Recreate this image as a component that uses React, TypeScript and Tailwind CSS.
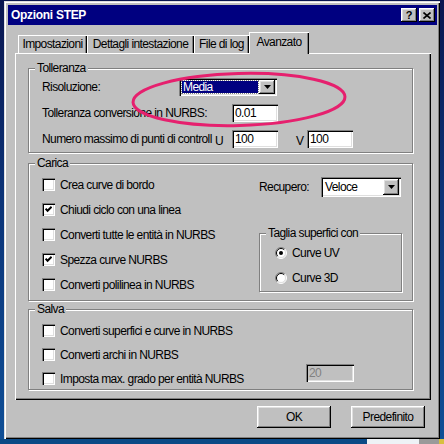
import type { ReactNode } from "react";

const raised =
  "shadow-[inset_-1px_-1px_#000000,inset_1px_1px_#ffffff,inset_-2px_-2px_#808080,inset_2px_2px_#dfdfdf]";
const sunken =
  "shadow-[inset_1px_1px_#808080,inset_2px_2px_#000000,inset_-1px_-1px_#ffffff,inset_-2px_-2px_#dfdfdf]";

function CheckBox({ checked = false }: { checked?: boolean }) {
  return (
    <span className={`flex h-[13px] w-[13px] shrink-0 items-center justify-center bg-white ${sunken}`}>
      {checked && (
        <svg width="7" height="7" viewBox="0 0 7 7">
          <path d="M0.6 2.6 L2.6 4.8 L6.6 0.8" stroke="#000" strokeWidth="2" fill="none" />
        </svg>
      )}
    </span>
  );
}

function Radio({ on = false }: { on?: boolean }) {
  return (
    <svg width="12" height="12" viewBox="0 0 12 12" className="shrink-0">
      <circle cx="6" cy="6" r="5" fill="#fff" />
      <path d="M2.1 9.9 A5.5 5.5 0 0 1 9.9 2.1" stroke="#808080" fill="none" />
      <path d="M2.8 9.2 A4.5 4.5 0 0 1 9.2 2.8" stroke="#000" fill="none" />
      <path d="M9.9 2.1 A5.5 5.5 0 0 1 2.1 9.9" stroke="#fff" fill="none" />
      <path d="M9.2 2.8 A4.5 4.5 0 0 1 2.8 9.2" stroke="#dfdfdf" fill="none" />
      {on && <circle cx="6" cy="6" r="2" fill="#000" />}
    </svg>
  );
}

function Arrow() {
  return (
    <span className={`flex w-[16px] shrink-0 items-center justify-center bg-[#c0c0c0] ${raised}`}>
      <svg width="7" height="4" viewBox="0 0 7 4">
        <path d="M0 0 H7 L3.5 4 Z" fill="#000" />
      </svg>
    </span>
  );
}

function Combo({ value, className, highlight = false }: { value: string; className: string; highlight?: boolean }) {
  return (
    <div className={`flex shrink-0 bg-white p-[2px] ${sunken} ${className}`}>
      {highlight ? (
        <span className="m-[1px] flex flex-1 items-center bg-[#000080] pl-[1px] text-white outline outline-1 outline-dotted outline-[#808080]">
          {value}
        </span>
      ) : (
        <span className="flex flex-1 items-center pl-[2px]">{value}</span>
      )}
      <Arrow />
    </div>
  );
}

function Edit({ value, className, disabled = false }: { value: string; className: string; disabled?: boolean }) {
  return (
    <div
      className={`flex shrink-0 items-center px-[3px] ${sunken} ${
        disabled ? "bg-[#c0c0c0] text-[#808080]" : "bg-white"
      } ${className}`}
    >
      {value}
    </div>
  );
}

function Group({ label, className, children }: { label: string; className: string; children: ReactNode }) {
  return (
    <div className={`relative shrink-0 border border-[#808080] shadow-[inset_1px_1px_#ffffff,1px_1px_#ffffff] ${className}`}>
      <span className="absolute left-[6px] top-[-8px] bg-[#c0c0c0] px-[2px] leading-[14px]">{label}</span>
      {children}
    </div>
  );
}

function CheckRow({ label, checked = false }: { label: string; checked?: boolean }) {
  return (
    <div className="flex h-[13px] items-center gap-[5px] whitespace-nowrap">
      <CheckBox checked={checked} />
      <span>{label}</span>
    </div>
  );
}

function Tab({ label, className, active = false }: { label: string; className: string; active?: boolean }) {
  return (
    <div
      className={`flex shrink-0 items-center justify-center bg-[#c0c0c0] ${
        active
          ? "relative z-10 -mb-[1px] h-[22px] pb-[2px] shadow-[inset_1px_1px_#ffffff,inset_-1px_0_#000000,inset_-2px_0_#808080]"
          : "h-[18px] shadow-[inset_1px_1px_#ffffff,inset_-1px_0_#000000,inset_-2px_0_#808080]"
      } ${className}`}
    >
      {label}
    </div>
  );
}

function Button({ label }: { label: string }) {
  return (
    <div className={`flex h-[22px] w-[74px] items-center justify-center bg-[#c0c0c0] ${raised}`}>{label}</div>
  );
}

export default function App() {
  return (
    <div className="relative h-[444px] w-[444px] overflow-hidden bg-[linear-gradient(180deg,#0a1650_0%,#0c3478_45%,#0f4f96_100%)] pl-[4px] pt-[1px] font-['Liberation_Sans',Arial,sans-serif] text-[12px] tracking-[-0.6px] text-black">
      <div className="flex h-[438px] w-[436px] flex-col bg-[#c0c0c0] pl-[4px] pr-[3px] pt-[4px] shadow-[inset_1px_1px_#dfdfdf,inset_2px_2px_#ffffff,inset_-1px_-1px_#000000,inset_-2px_-2px_#808080]">
        {/* title bar */}
        <div className="flex h-[20px] items-center justify-between bg-[#000080] pl-[3px] pr-[2px]">
          <span className="font-bold tracking-[-0.3px] text-white">Opzioni STEP</span>
          <div className="flex gap-[2px]">
            <div className={`flex h-[14px] w-[16px] items-center justify-center bg-[#c0c0c0] text-[11px] font-bold leading-none tracking-normal ${raised}`}>
              ?
            </div>
            <div className={`flex h-[14px] w-[16px] items-center justify-center bg-[#c0c0c0] ${raised}`}>
              <svg width="8" height="7" viewBox="0 0 8 7">
                <path d="M0.5 0.5 L7.5 6.5 M7.5 0.5 L0.5 6.5" stroke="#000" strokeWidth="1.6" />
              </svg>
            </div>
          </div>
        </div>

        {/* tabs */}
        <div className="ml-[10px] mt-[7px] flex h-[21px] items-end">
          <Tab label="Impostazioni" className="w-[69px]" />
          <Tab label="Dettagli intestazione" className="w-[107px]" />
          <Tab label="File di log" className="w-[55px]" />
          <Tab label="Avanzato" className="w-[60px]" active />
        </div>

        {/* panel */}
        <div className="ml-[7px] flex h-[347px] w-[416px] flex-col bg-[#c0c0c0] pl-[13px] pt-[15px] shadow-[inset_1px_1px_#ffffff,inset_-1px_-1px_#000000,inset_-2px_-2px_#808080]">
          <Group label="Tolleranza" className="h-[85px] w-[385px]">
            <div className="flex flex-col gap-[8px] pl-[13px] pt-[9px] whitespace-nowrap">
              <div className="flex h-[18px] items-center">
                <span className="w-[137px]">Risoluzione:</span>
                <Combo value="Media" className="h-[18px] w-[98px]" highlight />
              </div>
              <div className="flex h-[18px] items-center">
                <span className="w-[190px]">Tolleranza conversione in NURBS:</span>
                <Edit value="0.01" className="h-[18px] w-[46px]" />
              </div>
              <div className="flex h-[18px] items-center">
                <span className="w-[173px]">Numero massimo di punti di controll</span>
                <span className="w-[17px] pt-[3px]">U</span>
                <Edit value="100" className="h-[18px] w-[46px]" />
                <span className="ml-[18px] w-[11px] pt-[3px]">V</span>
                <Edit value="100" className="h-[18px] w-[46px]" />
              </div>
            </div>
          </Group>

          <Group label="Carica" className="mt-[10px] h-[138px] w-[385px]">
            <div className="flex">
              <div className="flex w-[230px] flex-col gap-[12px] pl-[13px] pt-[14px]">
                <CheckRow label="Crea curve di bordo" />
                <CheckRow label="Chiudi ciclo con una linea" checked />
                <CheckRow label="Converti tutte le entità in NURBS" />
                <CheckRow label="Spezza curve NURBS" checked />
                <CheckRow label="Converti polilinea in NURBS" />
              </div>
              <div className="flex flex-col pt-[13px]">
                <div className="flex h-[20px] items-center">
                  <span className="w-[62px]">Recupero:</span>
                  <Combo value="Veloce" className="h-[20px] w-[80px]" />
                </div>
                <Group label="Taglia superfici con" className="mt-[36px] h-[59px] w-[143px]">
                  <div className="flex flex-col gap-[13px] pl-[15px] pt-[13px]">
                    <div className="flex h-[12px] items-center gap-[5px]">
                      <Radio on />
                      <span>Curve UV</span>
                    </div>
                    <div className="flex h-[12px] items-center gap-[5px]">
                      <Radio />
                      <span>Curve 3D</span>
                    </div>
                  </div>
                </Group>
              </div>
            </div>
          </Group>

          <Group label="Salva" className="mt-[8px] h-[81px] w-[385px]">
            <div className="flex flex-col pl-[13px] pt-[14px]">
              <CheckRow label="Converti superfici e curve in NURBS" />
              <div className="mt-[11px]">
                <CheckRow label="Converti archi in NURBS" />
              </div>
              <div className="mt-[3px] flex items-start">
                <div className="mt-[8px] w-[264px]">
                  <CheckRow label="Imposta max. grado per entità NURBS" />
                </div>
                <Edit value="20" className="h-[18px] w-[48px]" disabled />
              </div>
            </div>
          </Group>
        </div>

        {/* buttons */}
        <div className="mt-[6px] flex justify-end gap-[20px] pr-[12px]">
          <Button label="OK" />
          <Button label="Predefinito" />
        </div>
      </div>

      {/* bottom strip of the desktop */}
      <div className="-ml-[4px] mt-[0px] h-[5px] w-[444px] bg-[linear-gradient(90deg,#0b4a86_0px,#0b4a86_367px,#eef2f6_367px,#eef2f6_419px,#9a9a9a_419px,#9a9a9a_439px,#d8c040_439px)]" />

      {/* hand-drawn highlight */}
      <svg className="pointer-events-none absolute left-0 top-0" width="444" height="444" viewBox="0 0 444 444">
        <ellipse cx="239" cy="99.5" rx="106" ry="26" transform="rotate(-1.5 239 99.5)" fill="none" stroke="#e6206e" strokeWidth="3" />
      </svg>
    </div>
  );
}
